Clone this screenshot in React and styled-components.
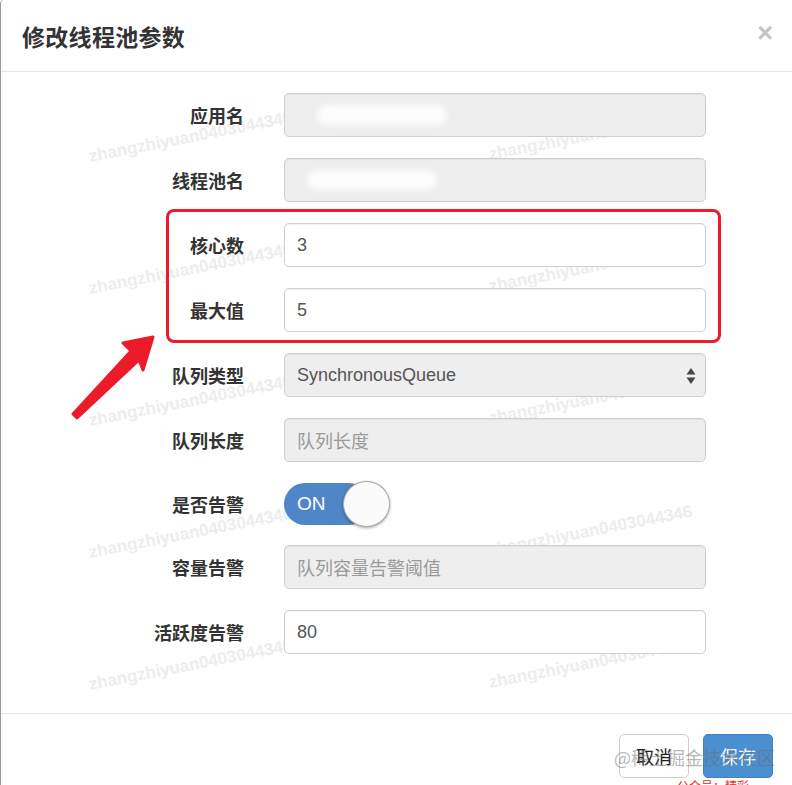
import React from "react";
import styled, { createGlobalStyle } from "styled-components";

const Global = createGlobalStyle`
  html, body { margin: 0; padding: 0; background: #fff; }
  body { width: 792px; height: 785px; overflow: hidden; font-family: "Liberation Sans", "Noto Sans CJK SC", sans-serif; }
  * { box-sizing: border-box; }
`;

const Modal = styled.div`
  position: relative;
  width: 792px;
  height: 785px;
  background: #fff;
  border-left: 1px solid #9a9a9a;
  border-top-left-radius: 4px;
  display: flex;
  flex-direction: column;
  overflow: hidden;
`;

const Header = styled.div`
  height: 72px;
  flex: none;
  border-bottom: 1px solid #e5e5e5;
  display: flex;
  align-items: center;
  justify-content: space-between;
  padding: 0 19px 0 21px;
`;

const Title = styled.h4`
  margin: 0;
  font-family: "Noto Sans CJK SC", sans-serif;
  font-size: 23px;
  font-weight: 700;
  color: #333;
  letter-spacing: 0.3px;
`;

const Close = styled.span`
  font-family: "Liberation Sans", sans-serif;
  font-size: 27px;
  font-weight: 700;
  color: #c4c4c4;
  line-height: 1;
  margin-top: -4px;
`;

const Body = styled.div`
  position: relative;
  flex: none;
  height: 642px;
  padding-top: 21px;
  border-bottom: 1px solid #e5e5e5;
`;

const Watermarks = styled.div`
  position: absolute;
  inset: 0;
  z-index: 0;
  pointer-events: none;
`;

const Mark = styled.span`
  position: absolute;
  white-space: nowrap;
  font-family: "Liberation Sans", sans-serif;
  font-size: 17px;
  font-weight: 700;
  color: #ededed;
  transform: rotate(-11deg);
  transform-origin: left center;
  line-height: 20px;
`;

const Form = styled.div`
  position: relative;
  z-index: 1;
  display: grid;
  grid-template-columns: 243px 422px;
  column-gap: 40px;
  row-gap: 21px;
`;

const Label = styled.label`
  font-family: "Noto Sans CJK SC", sans-serif;
  font-size: 18px;
  font-weight: 700;
  color: #333;
  text-align: right;
  align-self: center;
  line-height: 1;
`;

const Field = styled.div`
  position: relative;
  height: 44px;
  border: 1px solid #cfcfcf;
  border-radius: 5px;
  background: ${(p) => (p.$disabled ? "#eeeeee" : "#fff")};
  display: flex;
  align-items: center;
  padding: 0 12px;
  font-family: "Liberation Sans", "Noto Sans CJK SC", sans-serif;
  font-size: 18px;
  color: ${(p) => (p.$placeholder ? "#9a9a9a" : "#555")};
  box-shadow: inset 0 1px 1px rgba(0, 0, 0, 0.05);
`;

const Blur = styled.span`
  display: block;
  width: ${(p) => p.$w}px;
  height: 20px;
  margin-left: ${(p) => p.$ml || 0}px;
  border-radius: 12px;
  background: #fcfcfc;
  filter: blur(3px);
`;

const SelectArrows = styled.svg`
  position: absolute;
  right: 9px;
  top: 13px;
`;

const SwitchWrap = styled.div`
  position: relative;
  height: 41px;
  display: flex;
  align-items: center;
`;

const SwitchPill = styled.div`
  width: 86px;
  height: 42px;
  border-radius: 21px;
  background: #4f86c8;
  color: #fff;
  font-family: "Liberation Sans", sans-serif;
  font-size: 19px;
  display: flex;
  align-items: center;
  padding-left: 13px;
  flex: none;
`;

const Knob = styled.div`
  position: absolute;
  left: 59px;
  top: -2px;
  width: 47px;
  height: 46px;
  border-radius: 50%;
  background: #fbfbfb;
  border: 1px solid #a9a9a9;
  box-shadow: 0 1px 3px rgba(0, 0, 0, 0.35);
`;

const Highlight = styled.div`
  position: absolute;
  left: 165px;
  top: 137px;
  width: 555px;
  height: 134px;
  border: 3px solid #ec1b2a;
  border-radius: 8px;
  z-index: 2;
  pointer-events: none;
`;

const Arrow = styled.svg`
  position: absolute;
  left: 60px;
  top: 258px;
  z-index: 2;
`;

const Footer = styled.div`
  position: relative;
  flex: 1;
  display: flex;
  justify-content: flex-end;
  align-items: flex-start;
  gap: 14px;
  padding: 20px 19px 0 0;
`;

const Button = styled.button`
  height: 44px;
  padding: 0 16px;
  border-radius: 5px;
  font-family: "Noto Sans CJK SC", sans-serif;
  font-size: 18px;
  border: 1px solid ${(p) => (p.$primary ? "#3f82c0" : "#cfcfcf")};
  background: ${(p) => (p.$primary ? "#4a8fd0" : "#fff")};
  color: ${(p) => (p.$primary ? "#fff" : "#222")};
`;

const Juejin = styled.span`
  position: absolute;
  left: 613px;
  top: 30px;
  font-family: "Noto Sans CJK SC", sans-serif;
  font-size: 18px;
  color: rgba(110, 110, 110, 0.5);
  white-space: nowrap;
  pointer-events: none;
`;

const RedNote = styled.span`
  position: absolute;
  left: 676px;
  top: 63px;
  font-family: "Noto Sans CJK SC", sans-serif;
  font-size: 12px;
  color: #e0302a;
  white-space: nowrap;
`;

const marks = [155, 287, 419, 551, 683].flatMap((y) => [
  { x: 88, y: y - 70 },
  { x: 488, y: y - 72 },
]);

export default function App() {
  return (
    <>
      <Global />
      <Modal>
        <Header>
          <Title>修改线程池参数</Title>
          <Close>×</Close>
        </Header>
        <Body>
          <Watermarks>
            {marks.map((m, i) => (
              <Mark key={i} style={{ left: m.x, top: m.y - 10 }}>
                zhangzhiyuan0403044346
              </Mark>
            ))}
          </Watermarks>
          <Form>
            <Label>应用名</Label>
            <Field $disabled>
              <Blur $w={130} $ml={20} />
            </Field>
            <Label>线程池名</Label>
            <Field $disabled>
              <Blur $w={130} $ml={10} />
            </Field>
            <Label>核心数</Label>
            <Field>3</Field>
            <Label>最大值</Label>
            <Field>5</Field>
            <Label>队列类型</Label>
            <Field $disabled>
              SynchronousQueue
              <SelectArrows width="10" height="18" viewBox="0 0 10 18">
                <path d="M5 1 L9.5 7.5 L0.5 7.5 Z" fill="#444" />
                <path d="M5 17 L9.5 10.5 L0.5 10.5 Z" fill="#444" />
              </SelectArrows>
            </Field>
            <Label>队列长度</Label>
            <Field $disabled $placeholder>
              队列长度
            </Field>
            <Label>是否告警</Label>
            <SwitchWrap>
              <SwitchPill>ON</SwitchPill>
              <Knob />
            </SwitchWrap>
            <Label>容量告警</Label>
            <Field $disabled $placeholder>
              队列容量告警阈值
            </Field>
            <Label>活跃度告警</Label>
            <Field>80</Field>
          </Form>
          <Highlight />
          <Arrow width="100" height="90" viewBox="0 0 100 90">
            <polygon
              points="92,7 62,13 70,21 12,84 16,88 78,30 82,40"
              fill="#ec1b2a"
              stroke="#ec1b2a"
              strokeWidth="3"
              strokeLinejoin="round"
            />
          </Arrow>
        </Body>
        <Footer>
          <Button>取消</Button>
          <Button $primary>保存</Button>
          <Juejin>@稀土掘金技术社区</Juejin>
          <RedNote>公众号：精彩</RedNote>
        </Footer>
      </Modal>
    </>
  );
}
